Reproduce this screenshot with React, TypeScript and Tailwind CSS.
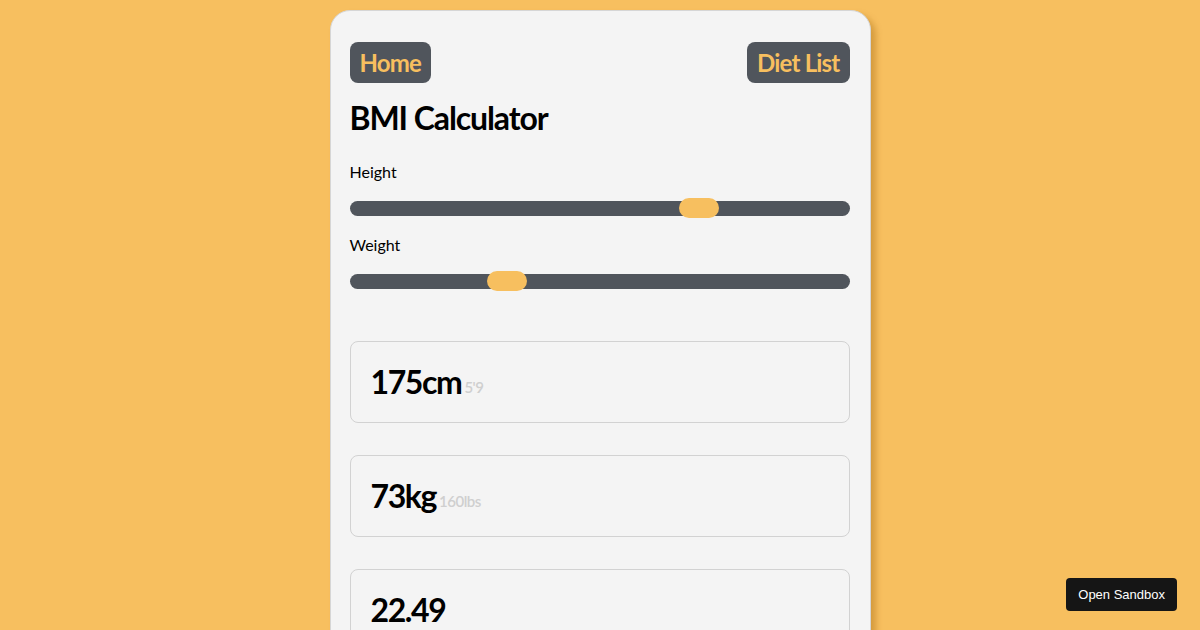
const font = { fontFamily: '"Lato", "Noto Sans", sans-serif' };

function Slider({ pos }: { pos: number }) {
  return (
    <div className="relative h-[15px] w-full rounded-full bg-[#50555c]">
      <div
        className="absolute top-[-3px] h-[20px] w-[40px] rounded-full bg-[#f7bf5f]"
        style={{ left: pos }}
      />
    </div>
  );
}

function ValueBox({ main, sub }: { main: string; sub?: string }) {
  return (
    <div className="flex h-[82px] items-center rounded-lg border border-[#d2d2d2] px-5">
      <span className="text-[32px] font-bold leading-none tracking-[-1.4px] text-black">{main}</span>
      {sub && <span className="ml-[3px] mt-[10px] text-[15px] font-semibold tracking-[-0.5px] text-[#cfcfcf]">{sub}</span>}
    </div>
  );
}

export default function App() {
  return (
    <div className="relative h-[630px] w-[1200px] overflow-hidden bg-[#f7bf5f]" style={font}>
      <div className="mx-auto mt-[10px] h-[700px] w-[541px] rounded-[20px] border border-[#d6d6d6] bg-[#f4f4f4] pl-[19px] pr-5 pt-[31px] shadow-[5px_5px_6px_rgba(150,90,0,0.35)]">
        <div className="flex items-center justify-between">
          <button className="h-[41px] rounded-[8px] bg-[#50555c] px-[10px] text-[24px] font-bold tracking-[-0.8px] text-[#f7bf5f]">Home</button>
          <button className="h-[41px] rounded-[8px] bg-[#50555c] px-[10px] text-[24px] font-bold tracking-[-0.8px] text-[#f7bf5f]">Diet List</button>
        </div>
        <h1 className="mt-[13px] text-[32px] font-bold leading-[44px] tracking-[-1.1px] text-black">BMI Calculator</h1>
        <div className="mt-[20px] text-[16px] text-black">Height</div>
        <div className="mt-[17px]">
          <Slider pos={329} />
        </div>
        <div className="mt-[17px] text-[16px] text-black">Weight</div>
        <div className="mt-[17px]">
          <Slider pos={137} />
        </div>
        <div className="mt-[52px] flex flex-col gap-[32px]">
          <ValueBox main="175cm" sub="5'9" />
          <ValueBox main="73kg" sub="160lbs" />
          <ValueBox main="22.49" />
        </div>
      </div>
      <button
        className="absolute right-[23px] bottom-[19px] h-[33px] rounded-[4px] bg-[#151515] px-[12px] text-[13px] text-white"
        style={{ fontFamily: '"Liberation Sans", Arial, sans-serif' }}
      >
        Open Sandbox
      </button>
    </div>
  );
}
